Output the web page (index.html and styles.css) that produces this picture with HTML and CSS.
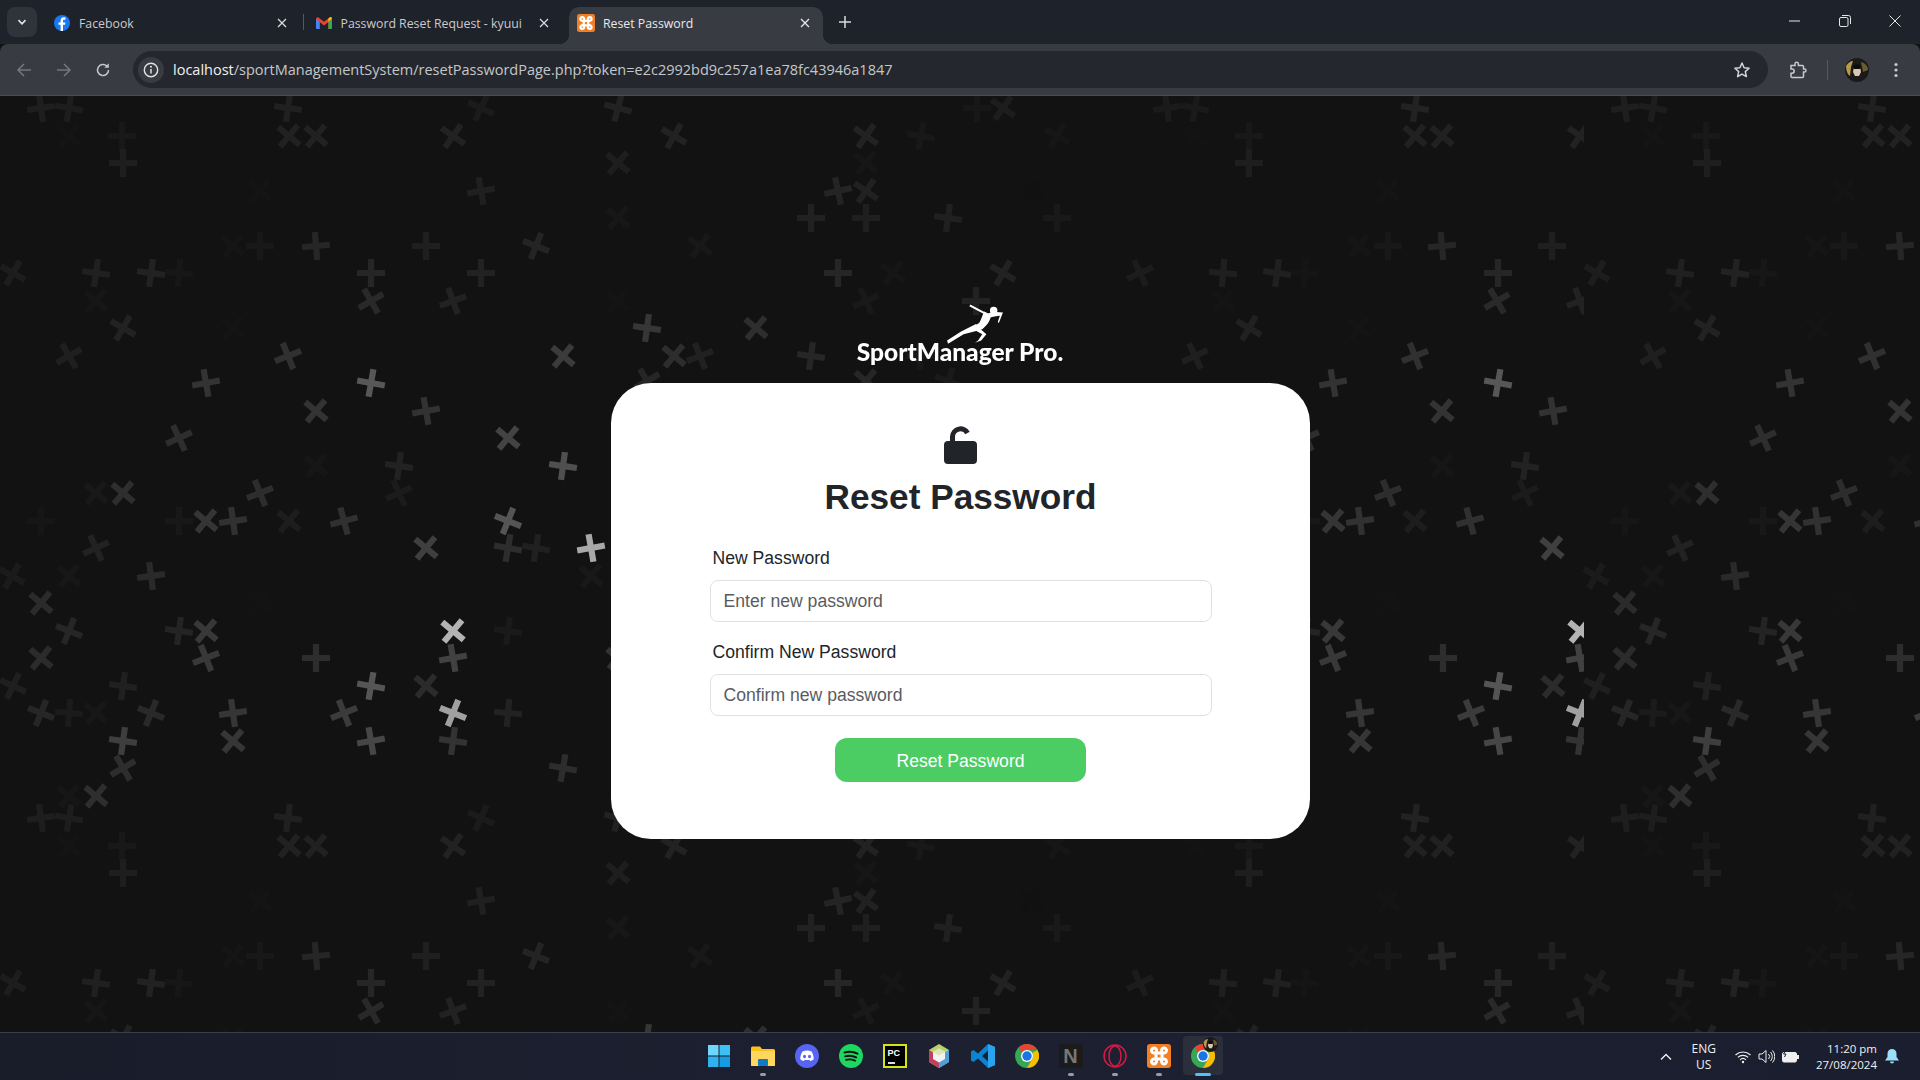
FILE: index.html
```html
<!DOCTYPE html>
<html lang="en">
<head>
    <meta charset="UTF-8">
    <meta name="viewport" content="width=device-width, initial-scale=1.0">
    <title>Reset Password</title>
    <link rel="stylesheet" href="styles.css">
</head>
<body>
    <header class="tabstrip">
        <button class="tab-search"><svg width="12" height="12" viewBox="0 0 12 12"><path d="M2.5 4.2 6 7.8l3.5-3.6" fill="none" stroke="#e3e3e3" stroke-width="1.7"/></svg></button>
        <div class="tab tab-sep">
            <svg class="favicon" viewBox="0 0 16 16"><circle cx="8" cy="8" r="8" fill="#1877f2"/><path d="M9 16V9.800h2l.4-2.400H9V6c0-.8.3-1.300 1.300-1.300h1.200V2.500C11 2.400 10.400 2.300 9.800 2.300 7.900 2.300 6.600 3.500 6.600 5.600v1.800H4.500v2.400h2.100V16z" fill="#fff"/></svg>
            <span class="tab-title">Facebook</span>
            <svg class="tab-close" viewBox="0 0 10 10"><path d="M1 1l8 8M9 1 1 9" stroke="#d8dade" stroke-width="1.3"/></svg>
        </div>
        <div class="tab">
            <svg class="favicon" viewBox="0 0 16 16"><path d="M0 3.500 1 14h2.600V7L8 10.400 12.400 7v7H15l1-10.500L14.300 2 8 6.800 1.700 2z" fill="#ea4335"/><path d="M0 3.500 3.600 7v7H1.100A1.100 1.100 0 0 1 0 12.900z" fill="#4285f4"/><path d="M16 3.500 12.400 7v7h2.500a1.100 1.100 0 0 0 1.100-1.100z" fill="#34a853"/><path d="M12.400 7 16 3.500c0-1.300-1-1.900-1.700-1.500l-1.900 1.500z" fill="#fbbc04"/></svg>
            <span class="tab-title">Password Reset Request - kyuui</span>
            <svg class="tab-close" viewBox="0 0 10 10"><path d="M1 1l8 8M9 1 1 9" stroke="#d8dade" stroke-width="1.3"/></svg>
        </div>
        <div class="tab tab-active">
            <svg class="favicon favicon-lg" viewBox="0 0 24 24"><use href="#xampp"/></svg>
            <span class="tab-title">Reset Password</span>
            <svg class="tab-close" viewBox="0 0 10 10"><path d="M1 1l8 8M9 1 1 9" stroke="#e8e9eb" stroke-width="1.3"/></svg>
        </div>
        <svg class="new-tab" viewBox="0 0 12 12"><path d="M6 0v12M0 6h12" stroke="#d8dade" stroke-width="1.5"/></svg>
        <div class="window-controls">
            <svg width="12" height="12" viewBox="0 0 12 12"><path d="M0 6h11" stroke="#e6e6e6"/></svg>
            <svg width="12" height="12" viewBox="0 0 12 12"><rect x=".5" y="2.5" width="8.5" height="9" rx="1.5" fill="none" stroke="#e6e6e6"/><path d="M3 .5h6.500a2 2 0 0 1 2 2V9" fill="none" stroke="#e6e6e6"/></svg>
            <svg width="12" height="12" viewBox="0 0 12 12"><path d="M.5.5l11 11M11.500.5l-11 11" stroke="#e6e6e6"/></svg>
        </div>
    </header>

    <nav class="toolbar">
        <svg class="tool-btn" viewBox="0 0 16 16"><path d="M15 8H2M8 2 2 8l6 6" fill="none" stroke="#74777c" stroke-width="1.5"/></svg>
        <svg class="tool-btn" viewBox="0 0 16 16"><path d="M1 8h13M8 2l6 6-6 6" fill="none" stroke="#74777c" stroke-width="1.5"/></svg>
        <svg class="tool-btn" viewBox="0 0 16 16"><path d="M13.500 8A5.500 5.500 0 1 1 11.800 4" fill="none" stroke="#c7c9cc" stroke-width="1.5"/><path d="M13.800 1.200v4.500H9.300z" fill="#c7c9cc"/></svg>
        <div class="omnibox">
            <span class="site-chip"><svg width="16" height="16" viewBox="0 0 16 16"><circle cx="8" cy="8" r="6.7" fill="none" stroke="#e3e3e3" stroke-width="1.4"/><path d="M8 7v4.500" stroke="#e3e3e3" stroke-width="1.5"/><circle cx="8" cy="4.8" r="1" fill="#e3e3e3"/></svg></span>
            <span class="url"><b>localhost</b>/sportManagementSystem/resetPasswordPage.php?token=e2c2992bd9c257a1ea78fc43946a1847</span>
            <svg class="star" width="18" height="18" viewBox="0 0 18 18"><path d="M9 2l2.100 4.700 5 .5-3.800 3.400 1.100 5L9 13.100l-4.400 2.500 1.100-5L1.900 7.200l5-.5z" fill="none" stroke="#d3d5d8" stroke-width="1.5" stroke-linejoin="round"/></svg>
        </div>
        <svg class="tool-btn ext" viewBox="0 0 18 18"><path d="M2 4.500h4V3a1.700 1.700 0 0 1 3.400 0v1.500h4.100a1 1 0 0 1 1 1V8h1a1.500 1.500 0 0 1 0 3h-1v4.500a1 1 0 0 1-1 1H3a1 1 0 0 1-1-1v-3.200h1a2.200 2.200 0 0 0 0-4.400H2z" fill="none" stroke="#c7c9cc" stroke-width="1.5"/></svg>
        <span class="toolbar-sep"></span>
        <svg class="avatar" viewBox="0 0 24 24"><use href="#face"/></svg>
        <svg class="dots" viewBox="0 0 16 16"><circle cx="8" cy="2.5" r="1.6" fill="#c7c9cc"/><circle cx="8" cy="8" r="1.6" fill="#c7c9cc"/><circle cx="8" cy="13.5" r="1.6" fill="#c7c9cc"/></svg>
    </nav>

    <main class="page">
        <svg class="pattern" viewBox="0 96 1920 936" aria-hidden="true">
            <defs>
                <filter id="dim" color-interpolation-filters="sRGB" x="0" y="0" width="100%" height="100%">
                    <feComponentTransfer>
                        <feFuncR type="table" tableValues="0 .08 .15 .25 .37 .5 .6 .7 .8 .9 1"/>
                        <feFuncG type="table" tableValues="0 .08 .15 .25 .37 .5 .6 .7 .8 .9 1"/>
                        <feFuncB type="table" tableValues="0 .08 .15 .25 .37 .5 .6 .7 .8 .9 1"/>
                    </feComponentTransfer>
                </filter>
                <path id="m" d="M-3.100-14h6.200v10.900H14v6.200H3.100V14h-6.200V3.100H-14v-6.200h10.900z"/>
                <clipPath id="tile-clip"><rect x="-20" y="0" width="1604" height="900"/></clipPath>
                <g id="tile">
                    <use href="#m" transform="translate(41 108) rotate(-8)" fill="#282828"/>
                    <use href="#m" transform="translate(69 108) rotate(10)" fill="#262626"/>
                    <use href="#m" transform="translate(288 108) rotate(8)" fill="#2b2b2b"/>
                    <use href="#m" transform="translate(481 108) rotate(25)" fill="#242424"/>
                    <use href="#m" transform="translate(618 108) rotate(15)" fill="#2e2e2e"/>
                    <use href="#m" transform="translate(69 136) rotate(40)" fill="#191919"/>
                    <use href="#m" transform="translate(122 136)" fill="#1f1f1f"/>
                    <use href="#m" transform="translate(289 136) rotate(40)" fill="#2c2c2c"/>
                    <use href="#m" transform="translate(316 136) rotate(40)" fill="#2c2c2c"/>
                    <use href="#m" transform="translate(453 136) rotate(35)" fill="#2e2e2e"/>
                    <use href="#m" transform="translate(123 163)" fill="#282828"/>
                    <use href="#m" transform="translate(618 163) rotate(40)" fill="#282828"/>
                    <use href="#m" transform="translate(535 163)" fill="#171717"/>
                    <use href="#m" transform="translate(481 191) rotate(-10)" fill="#2b2b2b"/>
                    <use href="#m" transform="translate(260 191) rotate(40)" fill="#191919"/>
                    <use href="#m" transform="translate(618 218) rotate(40)" fill="#1e1e1e"/>
                    <use href="#m" transform="translate(233 246) rotate(40)" fill="#1b1b1b"/>
                    <use href="#m" transform="translate(260 246)" fill="#1f1f1f"/>
                    <use href="#m" transform="translate(316 246) rotate(-5)" fill="#333"/>
                    <use href="#m" transform="translate(426 246)" fill="#2a2a2a"/>
                    <use href="#m" transform="translate(536 246) rotate(22)" fill="#303030"/>
                    <use href="#m" transform="translate(13 273) rotate(30)" fill="#262626"/>
                    <use href="#m" transform="translate(96 273) rotate(8)" fill="#2b2b2b"/>
                    <use href="#m" transform="translate(151 273) rotate(8)" fill="#2e2e2e"/>
                    <use href="#m" transform="translate(179 273) rotate(5)" fill="#1e1e1e"/>
                    <use href="#m" transform="translate(371 273)" fill="#333"/>
                    <use href="#m" transform="translate(481 273)" fill="#2e2e2e"/>
                    <use href="#m" transform="translate(96 301) rotate(40)" fill="#1c1c1c"/>
                    <use href="#m" transform="translate(371 301) rotate(-30)" fill="#363636"/>
                    <use href="#m" transform="translate(453 301) rotate(-20)" fill="#2d2d2d"/>
                    <use href="#m" transform="translate(618 301) rotate(40)" fill="#191919"/>
                    <use href="#m" transform="translate(123 328) rotate(30)" fill="#2d2d2d"/>
                    <use href="#m" transform="translate(233 328) rotate(40)" fill="#191919"/>
                    <use href="#m" transform="translate(69 356) rotate(-30)" fill="#292929"/>
                    <use href="#m" transform="translate(288 356) rotate(-22)" fill="#3d3d3d"/>
                    <use href="#m" transform="translate(563 356) rotate(40)" fill="#484848"/>
                    <use href="#m" transform="translate(206 383) rotate(-10)" fill="#404040"/>
                    <use href="#m" transform="translate(371 383) rotate(10)" fill="#606060"/>
                    <use href="#m" transform="translate(316 411) rotate(40)" fill="#404040"/>
                    <use href="#m" transform="translate(426 411) rotate(-10)" fill="#3f3f3f"/>
                    <use href="#m" transform="translate(179 438) rotate(-25)" fill="#3b3b3b"/>
                    <use href="#m" transform="translate(508 438) rotate(40)" fill="#505050"/>
                    <use href="#m" transform="translate(563 466) rotate(8)" fill="#5a5a5a"/>
                    <use href="#m" transform="translate(316 466) rotate(40)" fill="#1d1d1d"/>
                    <use href="#m" transform="translate(399 466) rotate(8)" fill="#2d2d2d"/>
                    <use href="#m" transform="translate(96 493) rotate(40)" fill="#202020"/>
                    <use href="#m" transform="translate(123 493) rotate(40)" fill="#3b3b3b"/>
                    <use href="#m" transform="translate(260 493) rotate(-22)" fill="#3a3a3a"/>
                    <use href="#m" transform="translate(399 493) rotate(-25)" fill="#232323"/>
                    <use href="#m" transform="translate(41 521)" fill="#1c1c1c"/>
                    <use href="#m" transform="translate(179 521)" fill="#1f1f1f"/>
                    <use href="#m" transform="translate(206 521) rotate(40)" fill="#424242"/>
                    <use href="#m" transform="translate(233 521) rotate(-8)" fill="#3e3e3e"/>
                    <use href="#m" transform="translate(289 521) rotate(40)" fill="#262626"/>
                    <use href="#m" transform="translate(344 521) rotate(-15)" fill="#3d3d3d"/>
                    <use href="#m" transform="translate(508 521) rotate(22)" fill="#5f5f5f"/>
                    <use href="#m" transform="translate(96 548) rotate(-25)" fill="#2d2d2d"/>
                    <use href="#m" transform="translate(426 548) rotate(40)" fill="#4c4c4c"/>
                    <use href="#m" transform="translate(508 548) rotate(10)" fill="#3a3a3a"/>
                    <use href="#m" transform="translate(536 548) rotate(10)" fill="#2b2b2b"/>
                    <use href="#m" transform="translate(591 548) rotate(-10)" fill="#a8a8a8"/>
                    <use href="#m" transform="translate(12 576) rotate(30)" fill="#242424"/>
                    <use href="#m" transform="translate(69 576) rotate(40)" fill="#1e1e1e"/>
                    <use href="#m" transform="translate(151 576) rotate(-8)" fill="#373737"/>
                    <use href="#m" transform="translate(591 576) rotate(40)" fill="#202020"/>
                    <use href="#m" transform="translate(41 603) rotate(40)" fill="#383838"/>
                    <use href="#m" transform="translate(260 603) rotate(40)" fill="#181818"/>
                    <use href="#m" transform="translate(69 631) rotate(22)" fill="#333"/>
                    <use href="#m" transform="translate(179 631) rotate(8)" fill="#303030"/>
                    <use href="#m" transform="translate(206 631) rotate(40)" fill="#454545"/>
                    <use href="#m" transform="translate(453 631) rotate(40)" fill="#b4b4b4"/>
                    <use href="#m" transform="translate(508 631) rotate(8)" fill="#222"/>
                    <use href="#m" transform="translate(41 658) rotate(40)" fill="#383838"/>
                    <use href="#m" transform="translate(206 658) rotate(-22)" fill="#454545"/>
                    <use href="#m" transform="translate(316 658)" fill="#3a3a3a"/>
                    <use href="#m" transform="translate(453 658) rotate(-10)" fill="#4e4e4e"/>
                    <use href="#m" transform="translate(618 658) rotate(40)" fill="#404040"/>
                    <use href="#m" transform="translate(13 686) rotate(25)" fill="#2a2a2a"/>
                    <use href="#m" transform="translate(123 686) rotate(8)" fill="#2b2b2b"/>
                    <use href="#m" transform="translate(371 686) rotate(10)" fill="#5f5f5f"/>
                    <use href="#m" transform="translate(426 686) rotate(40)" fill="#383838"/>
                    <use href="#m" transform="translate(41 713) rotate(22)" fill="#333"/>
                    <use href="#m" transform="translate(69 713) rotate(5)" fill="#232323"/>
                    <use href="#m" transform="translate(96 713) rotate(40)" fill="#1e1e1e"/>
                    <use href="#m" transform="translate(151 713) rotate(22)" fill="#363636"/>
                    <use href="#m" transform="translate(233 713) rotate(-8)" fill="#434343"/>
                    <use href="#m" transform="translate(344 713) rotate(-22)" fill="#484848"/>
                    <use href="#m" transform="translate(453 713) rotate(22)" fill="#a0a0a0"/>
                    <use href="#m" transform="translate(508 713) rotate(5)" fill="#2d2d2d"/>
                    <use href="#m" transform="translate(123 741) rotate(8)" fill="#4b4b4b"/>
                    <use href="#m" transform="translate(233 741) rotate(40)" fill="#434343"/>
                    <use href="#m" transform="translate(371 741) rotate(-10)" fill="#525252"/>
                    <use href="#m" transform="translate(453 741) rotate(8)" fill="#404040"/>
                    <use href="#m" transform="translate(123 768) rotate(-30)" fill="#3a3a3a"/>
                    <use href="#m" transform="translate(563 768) rotate(10)" fill="#3a3a3a"/>
                    <use href="#m" transform="translate(69 796) rotate(40)" fill="#1c1c1c"/>
                    <use href="#m" transform="translate(96 796) rotate(40)" fill="#3b3b3b"/>

                    <use href="#m" transform="translate(674 136) rotate(30)" fill="#2e2e2e"/>
                    <use href="#m" transform="translate(866 136) rotate(35)" fill="#2e2e2e"/>
                    <use href="#m" transform="translate(921 136) rotate(10)" fill="#1f1f1f"/>
                    <use href="#m" transform="translate(977 108)" fill="#1e1e1e"/>
                    <use href="#m" transform="translate(1003 108) rotate(35)" fill="#262626"/>
                    <use href="#m" transform="translate(1167 108) rotate(-8)" fill="#232323"/>
                    <use href="#m" transform="translate(1195 108) rotate(10)" fill="#222"/>
                    <use href="#m" transform="translate(1003 136) rotate(40)" fill="#171717"/>
                    <use href="#m" transform="translate(1057 136) rotate(30)" fill="#1c1c1c"/>
                    <use href="#m" transform="translate(1195 136) rotate(40)" fill="#181818"/>
                    <use href="#m" transform="translate(1249 136)" fill="#202020"/>
                    <use href="#m" transform="translate(866 163) rotate(40)" fill="#1c1c1c"/>
                    <use href="#m" transform="translate(1249 163)" fill="#282828"/>
                    <use href="#m" transform="translate(838 191) rotate(-12)" fill="#303030"/>
                    <use href="#m" transform="translate(866 191) rotate(35)" fill="#2c2c2c"/>
                    <use href="#m" transform="translate(1031 191) rotate(40)" fill="#161616"/>
                    <use href="#m" transform="translate(811 218)" fill="#2c2c2c"/>
                    <use href="#m" transform="translate(866 218)" fill="#2a2a2a"/>
                    <use href="#m" transform="translate(948 218) rotate(8)" fill="#2b2b2b"/>
                    <use href="#m" transform="translate(1057 218)" fill="#212121"/>
                    <use href="#m" transform="translate(1140 218)" fill="#171717"/>
                    <use href="#m" transform="translate(700 246) rotate(35)" fill="#1f1f1f"/>
                    <use href="#m" transform="translate(838 273)" fill="#333"/>
                    <use href="#m" transform="translate(893 273) rotate(35)" fill="#1c1c1c"/>
                    <use href="#m" transform="translate(1003 273) rotate(30)" fill="#2d2d2d"/>
                    <use href="#m" transform="translate(1140 273) rotate(-25)" fill="#252525"/>
                    <use href="#m" transform="translate(1223 273) rotate(5)" fill="#2a2a2a"/>
                    <use href="#m" transform="translate(1277 273) rotate(8)" fill="#2b2b2b"/>
                    <use href="#m" transform="translate(1305 273) rotate(5)" fill="#1b1b1b"/>
                    <use href="#m" transform="translate(866 301) rotate(-25)" fill="#212121"/>
                    <use href="#m" transform="translate(976 301)" fill="#2d2d2d"/>
                    <use href="#m" transform="translate(1223 301) rotate(40)" fill="#191919"/>
                    <use href="#m" transform="translate(647 328) rotate(8)" fill="#434343"/>
                    <use href="#m" transform="translate(756 328) rotate(40)" fill="#3b3b3b"/>
                    <use href="#m" transform="translate(1249 328) rotate(30)" fill="#2c2c2c"/>
                    <use href="#m" transform="translate(674 356) rotate(40)" fill="#3a3a3a"/>
                    <use href="#m" transform="translate(700 356) rotate(-22)" fill="#2c2c2c"/>
                    <use href="#m" transform="translate(811 356) rotate(8)" fill="#333"/>
                    <use href="#m" transform="translate(920 356)" fill="#1f1f1f"/>
                    <use href="#m" transform="translate(1195 356) rotate(-25)" fill="#292929"/>
                    <use href="#m" transform="translate(866 381) rotate(40)" fill="#333"/>
                    <use href="#m" transform="translate(948 381) rotate(20)" fill="#222"/>
                    <use href="#m" transform="translate(647 381) rotate(-30)" fill="#333"/>

                    <use href="#m" transform="translate(1415 108) rotate(8)" fill="#2e2e2e"/>
                    <use href="#m" transform="translate(1415 136) rotate(40)" fill="#2c2c2c"/>
                    <use href="#m" transform="translate(1442 136) rotate(40)" fill="#2c2c2c"/>
                    <use href="#m" transform="translate(1580 136) rotate(35)" fill="#2e2e2e"/>
                    <use href="#m" transform="translate(1388 191) rotate(40)" fill="#191919"/>
                    <use href="#m" transform="translate(1359 246) rotate(40)" fill="#1b1b1b"/>
                    <use href="#m" transform="translate(1388 246)" fill="#1f1f1f"/>
                    <use href="#m" transform="translate(1442 246) rotate(-5)" fill="#333"/>
                    <use href="#m" transform="translate(1552 246)" fill="#2a2a2a"/>
                    <use href="#m" transform="translate(1498 273)" fill="#333"/>
                    <use href="#m" transform="translate(1497 301) rotate(-30)" fill="#363636"/>
                    <use href="#m" transform="translate(1580 301) rotate(-20)" fill="#2d2d2d"/>
                    <use href="#m" transform="translate(1359 328) rotate(40)" fill="#191919"/>
                    <use href="#m" transform="translate(1415 356) rotate(-22)" fill="#3d3d3d"/>
                    <use href="#m" transform="translate(1333 383) rotate(-10)" fill="#404040"/>
                    <use href="#m" transform="translate(1498 383) rotate(10)" fill="#606060"/>
                    <use href="#m" transform="translate(1442 411) rotate(40)" fill="#404040"/>
                    <use href="#m" transform="translate(1553 411) rotate(-10)" fill="#3f3f3f"/>
                    <use href="#m" transform="translate(1306 438) rotate(-25)" fill="#3b3b3b"/>
                    <use href="#m" transform="translate(1442 466) rotate(40)" fill="#1d1d1d"/>
                    <use href="#m" transform="translate(1525 466) rotate(8)" fill="#2d2d2d"/>
                    <use href="#m" transform="translate(1388 493) rotate(-22)" fill="#3a3a3a"/>
                    <use href="#m" transform="translate(1525 493) rotate(-25)" fill="#232323"/>
                    <use href="#m" transform="translate(1306 521)" fill="#1f1f1f"/>
                    <use href="#m" transform="translate(1333 521) rotate(40)" fill="#424242"/>
                    <use href="#m" transform="translate(1360 521) rotate(-8)" fill="#3e3e3e"/>
                    <use href="#m" transform="translate(1415 521) rotate(40)" fill="#262626"/>
                    <use href="#m" transform="translate(1470 521) rotate(-15)" fill="#3d3d3d"/>
                    <use href="#m" transform="translate(1552 548) rotate(40)" fill="#4c4c4c"/>
                    <use href="#m" transform="translate(1388 603) rotate(40)" fill="#181818"/>
                    <use href="#m" transform="translate(1306 631) rotate(8)" fill="#303030"/>
                    <use href="#m" transform="translate(1333 631) rotate(40)" fill="#454545"/>
                    <use href="#m" transform="translate(1580 631) rotate(40)" fill="#b4b4b4"/>
                    <use href="#m" transform="translate(1333 658) rotate(-22)" fill="#454545"/>
                    <use href="#m" transform="translate(1443 658)" fill="#3a3a3a"/>
                    <use href="#m" transform="translate(1580 658) rotate(-10)" fill="#4e4e4e"/>
                    <use href="#m" transform="translate(1498 686) rotate(10)" fill="#5f5f5f"/>
                    <use href="#m" transform="translate(1553 686) rotate(40)" fill="#383838"/>
                    <use href="#m" transform="translate(1360 713) rotate(-8)" fill="#434343"/>
                    <use href="#m" transform="translate(1471 713) rotate(-22)" fill="#484848"/>
                    <use href="#m" transform="translate(1580 713) rotate(22)" fill="#a0a0a0"/>
                    <use href="#m" transform="translate(1360 741) rotate(40)" fill="#434343"/>
                    <use href="#m" transform="translate(1498 741) rotate(-10)" fill="#525252"/>
                    <use href="#m" transform="translate(1580 741) rotate(8)" fill="#404040"/>
                </g>
            </defs>
            <g filter="url(#dim)">
                <g clip-path="url(#tile-clip)"><use href="#tile"/></g>
                <g clip-path="url(#tile-clip)" transform="translate(0 710)"><use href="#tile"/></g>
                <g clip-path="url(#tile-clip)" transform="translate(1584 0)"><use href="#tile"/></g>
                <g clip-path="url(#tile-clip)" transform="translate(1584 710)"><use href="#tile"/></g>
            </g>
        </svg>

        <div class="brand">
            <svg class="runner" viewBox="0 0 56 40">
                <path d="M23 2l15 8" fill="none" stroke="#fff" stroke-width="2"/>
                <path d="M40 10c4-2 10-2 15-1l-4 10-1-1 2-6c-3 0-7 1-10 2z" fill="#fff"/>
                <circle cx="46" cy="7" r="3.6" fill="#fff"/>
                <path d="M37 8l6 3c1 4-3 10-8 14l-5 1-3-4 5-3c2-3 3-7 5-11z" fill="#fff"/>
                <path d="M29 20 15 27 1 36l1 3 15-9 15-4z" fill="#fff"/>
                <path d="M31 23l8 7-5 6-6 2 3-2 4-6-7-4z" fill="#fff"/>
            </svg>
            <span class="brand-name">SportManager Pro.</span>
        </div>

        <section class="card">
            <svg class="lock" viewBox="0 0 35 38"><rect x="1" y="15" width="33" height="23" rx="4" fill="#212529"/><path d="M9.500 17V10.500A8 8 0 0 1 24.500 7" fill="none" stroke="#212529" stroke-width="5"/></svg>
            <h1>Reset Password</h1>
            <form class="form">
                <label for="new-pass">New Password</label>
                <input type="password" id="new-pass" placeholder="Enter new password">
                <label for="confirm-pass">Confirm New Password</label>
                <input type="password" id="confirm-pass" placeholder="Confirm new password">
                <button type="button" class="submit">Reset Password</button>
            </form>
        </section>
    </main>

    <footer class="taskbar">
        <div></div>
        <div class="task-icons">
            <span class="task"><svg viewBox="0 0 24 24"><rect x="1" y="1" width="10.5" height="10.5" fill="#6fd6ff"/><rect x="12.5" y="1" width="10.5" height="10.5" fill="#3cc0f5"/><rect x="1" y="12.5" width="10.5" height="10.5" fill="#2fb0ef"/><rect x="12.5" y="12.5" width="10.5" height="10.5" fill="#169ae2"/></svg></span>
            <span class="task running"><svg viewBox="0 0 24 24"><path d="M0 4a1.500 1.500 0 0 1 1.500-1.500H9L11 5h11.500A1.500 1.500 0 0 1 24 6.500V21a1 1 0 0 1-1 1H1a1 1 0 0 1-1-1z" fill="#fcc21b"/><path d="M0 7h24v14a1 1 0 0 1-1 1H1a1 1 0 0 1-1-1z" fill="#ffd75e"/><rect x="7" y="15" width="10" height="7" rx="1" fill="#0f7bc4"/></svg></span>
            <span class="task"><svg viewBox="0 0 24 24"><circle cx="12" cy="12" r="12" fill="#5865f2"/><path d="M7.500 7.500c3-1.200 6-1.200 9 0 1.500 2.300 2.300 5 2.200 7.800-1.200 1-2.400 1.500-3.600 1.800l-.8-1.300c-1.500.4-3 .4-4.600 0l-.8 1.300c-1.200-.3-2.400-.8-3.600-1.800-.1-2.800.7-5.500 2.200-7.800z" fill="#fff"/><ellipse cx="9.5" cy="12.5" rx="1.5" ry="1.7" fill="#5865f2"/><ellipse cx="14.5" cy="12.5" rx="1.5" ry="1.7" fill="#5865f2"/></svg></span>
            <span class="task"><svg viewBox="0 0 24 24"><circle cx="12" cy="12" r="12" fill="#1ed760"/><path d="M5.500 8.500c4-1.200 9-1 13 1.200M6.200 12.300c3.500-1 7.500-.7 11 1.100M7 15.800c3-.8 6-.5 9 .9" fill="none" stroke="#111" stroke-width="1.9" stroke-linecap="round"/></svg></span>
            <span class="task"><span class="pycharm">PC<i></i></span></span>
            <span class="task"><svg viewBox="0 0 24 24"><path d="M12 0 22 6v12l-10 6L2 18V6z" fill="#b9d36c"/><path d="M2 6l10 6v12L2 18z" fill="#c2405f"/><path d="M22 6 12 12v12l10-6z" fill="#4f9fd8"/><path d="M12 4.500 18 8v7l-6 3.500L6 15V8z" fill="#f2f2f2"/><path d="M6 8l6 3.500L18 8l-6-3.500z" fill="#dfe6b5"/></svg></span>
            <span class="task"><svg viewBox="0 0 24 24"><path d="M17 0l7 3v18l-7 3L7 14.500 2.500 18 0 16.500V7.500L2.500 6 7 9.500zm0 6.500L11 12l6 5.500z" fill="#0a84d0"/><path d="M17 0l7 3v18l-7 3z" fill="#2aa3ee"/></svg></span>
            <span class="task"><svg viewBox="0 0 24 24"><use href="#chrome"/></svg></span>
            <span class="task running"><span class="notion">N</span></span>
            <span class="task running"><svg viewBox="0 0 24 24"><circle cx="12" cy="12" r="11" fill="none" stroke="#d41a44" stroke-width="1.5"/><ellipse cx="12" cy="12" rx="6" ry="10" fill="none" stroke="#d41a44" stroke-width="1.5"/></svg></span>
            <span class="task running"><svg viewBox="0 0 24 24"><use href="#xampp"/></svg></span>
            <span class="task task-active"><svg viewBox="0 0 24 24"><use href="#chrome"/></svg><svg class="task-badge" viewBox="0 0 24 24"><use href="#face"/></svg></span>
        </div>
        <div class="tray">
            <svg class="caret" width="12" height="8" viewBox="0 0 12 8"><path d="M1 6.500 6 1.500l5 5" fill="none" stroke="#f0f0f0" stroke-width="1.4"/></svg>
            <div class="lang">ENG<br>US</div>
            <svg class="wifi" width="16" height="14" viewBox="0 0 16 14"><path d="M.5 5a11 11 0 0 1 15 0M2.800 7.400a7.700 7.700 0 0 1 10.400 0M5 9.800a4.400 4.400 0 0 1 6 0" fill="none" stroke="#f0f0f0" stroke-width="1.1"/><circle cx="8" cy="12" r="1.2" fill="#f0f0f0"/></svg>
            <svg class="volume" width="17" height="15" viewBox="0 0 17 15"><path d="M1 5h3l4-3.500v12L4 10H1z" fill="none" stroke="#f0f0f0"/><path d="M10.500 5a3.500 3.500 0 0 1 0 5M12.500 3a6.500 6.500 0 0 1 0 9M14.500 1.500a9 9 0 0 1 0 12" fill="none" stroke="#f0f0f0"/></svg>
            <svg class="battery" width="17" height="13" viewBox="0 0 17 13"><rect x=".5" y="2.5" width="14" height="9.5" rx="1.5" fill="#f0f0f0" stroke="#f0f0f0"/><rect x="15" y="5" width="2" height="4" fill="#f0f0f0"/><path d="M4 0 1.500 4H4L2.500 7" fill="none" stroke="#1b1f2e"/></svg>
            <div class="clock">11:20 pm<br>27/08/2024</div>
            <svg class="bell" width="14" height="15" viewBox="0 0 14 15"><path d="M7 0a4.500 4.500 0 0 1 4.500 4.500V8L14 11.500H0L2.500 8V4.500A4.500 4.500 0 0 1 7 0z" fill="#9be0fb"/><path d="M5 12.500h4a2 2 0 0 1-4 0z" fill="#9be0fb"/></svg>
        </div>
    </footer>

    <svg class="sprites" width="0" height="0" aria-hidden="true">
        <defs>
            <g id="chrome">
                <circle cx="12" cy="12" r="12" fill="#34a853"/>
                <path d="M22.400 6A12 12 0 0 1 12 24l5.200-9a6 6 0 0 0 0-6z" fill="#fbbc04"/>
                <path d="M12 0a12 12 0 0 1 10.400 6H12a6 6 0 0 0-5.200 3L3.600 3.500A12 12 0 0 1 12 0z" fill="#ea4335"/>
                <circle cx="12" cy="12" r="6" fill="#fff"/>
                <circle cx="12" cy="12" r="4.7" fill="#1a73e8"/>
            </g>
            <g id="xampp">
                <rect width="24" height="24" rx="3" fill="#f37f24"/>
                <path d="M9 9h6v6H9zM9 9H7.500a2.500 2.500 0 1 1 2-2.500zM15 9h1.500a2.500 2.500 0 1 0-2-2.500zM9 15H7.500a2.500 2.500 0 1 0 2 2.500zM15 15h1.500a2.500 2.500 0 1 1-2 2.500z" fill="none" stroke="#fff" stroke-width="3"/>
            </g>
            <g id="face">
                <circle cx="12" cy="12" r="12" fill="#1c1a18"/>
                <path d="M1 8c2-3 4-5 7-5l-2 6-1 9c-3-2-4-6-4-10z" fill="#b59a4a"/>
                <path d="M16 4c4 1 7 4 7 8l-5 2z" fill="#6b5a35"/>
                <path d="M9 9h6l1 5-2 4h-4l-2-4z" fill="#d9c9b4"/>
                <path d="M8 8c2-2 6-2 8 0l-1 3H9z" fill="#0d0c0c"/>
            </g>
        </defs>
    </svg>
</body>
</html>
```

FILE: styles.css
```css
* {
    box-sizing: border-box;
}
body {
    display: flex;
    flex-direction: column;
    height: 100vh;
    margin: 0;
    overflow: hidden;
    font-family: "Liberation Sans", Arial, sans-serif;
    background: #121212;
}
svg {
    display: block;
    flex: none;
}
.sprites {
    position: absolute;
}

/* browser tabs */
.tabstrip {
    display: flex;
    align-items: flex-end;
    flex: none;
    height: 44px;
    padding-left: 7px;
    background: #1e222a;
    font-family: "Open Sans", sans-serif;
    font-size: 12.3px;
    color: #c9cbcf;
}
.tab-search {
    width: 30px;
    height: 30px;
    margin: 0 9px 7px 0;
    padding: 0 0 0 9px;
    border: none;
    border-radius: 8px;
    background: #2f333a;
}
.tab {
    position: relative;
    display: flex;
    align-items: center;
    width: 254px;
    height: 37px;
    margin-right: 7.5px;
    padding: 1px 13px 6px 8px;
}
.tab-sep::after {
    content: "";
    position: absolute;
    top: 7px;
    right: -4px;
    width: 1px;
    height: 16px;
    background: #555960;
}
.tab-active {
    margin-right: 0;
    background: #383b42;
    border-radius: 10px 10px 0 0;
    color: #e8e9eb;
}
.tab-active::before,
.tab-active::after {
    content: "";
    position: absolute;
    bottom: 0;
    width: 10px;
    height: 10px;
}
.tab-active::before {
    left: -10px;
    background: radial-gradient(circle at 0 0, transparent 10px, #383b42 10.5px);
}
.tab-active::after {
    right: -10px;
    background: radial-gradient(circle at 100% 0, transparent 10px, #383b42 10.5px);
}
.favicon {
    width: 16px;
    height: 16px;
    margin-right: 9px;
}
.favicon-lg {
    width: 18px;
    height: 18px;
    margin-right: 8px;
}
.tab-title {
    flex: 1;
    overflow: hidden;
    white-space: nowrap;
}
.tab-close {
    width: 10px;
    height: 10px;
    margin-left: 8px;
}
.new-tab {
    width: 12px;
    height: 12px;
    margin: 0 0 16px 16px;
}
.window-controls {
    display: flex;
    align-items: center;
    gap: 38px;
    height: 44px;
    margin-left: auto;
    padding: 0 19px 2px 0;
}

/* browser toolbar */
.toolbar {
    display: flex;
    align-items: center;
    flex: none;
    height: 52px;
    padding-left: 8px;
    background: #383b42;
    border-bottom: 1px solid #4a4c51;
    border-radius: 8px 8px 0 0;
}
.tool-btn {
    width: 16px;
    height: 16px;
    margin: 0 15.5px 0 8px;
}
.omnibox {
    display: flex;
    align-items: center;
    width: 1635px;
    height: 37px;
    margin-left: 6.5px;
    padding: 0 17px 0 5px;
    background: #24272e;
    border-radius: 19px;
}
.site-chip {
    display: flex;
    align-items: center;
    justify-content: center;
    width: 26px;
    height: 26px;
    border-radius: 50%;
    background: #383b42;
}
.url {
    flex: 1;
    margin-left: 9px;
    font-family: "Open Sans", sans-serif;
    font-size: 14.5px;
    color: #c4c7c9;
    white-space: nowrap;
}
.url b {
    font-weight: 400;
    color: #f1f1f1;
}
.ext {
    width: 18px;
    height: 18px;
    margin: 0 0 0 21px;
}
.toolbar-sep {
    width: 1px;
    height: 20px;
    margin-left: 20px;
    background: #55585e;
}
.avatar {
    width: 24px;
    height: 24px;
    margin-left: 17px;
}
.dots {
    width: 16px;
    height: 16px;
    margin-left: 19px;
}

/* page */
.page {
    position: relative;
    display: flex;
    flex: 1;
    flex-direction: column;
    align-items: center;
    min-height: 0;
    overflow: hidden;
    padding-top: 193px;
}
.pattern {
    position: absolute;
    top: 0;
    left: 0;
    width: 1920px;
    height: 936px;
}
.brand {
    position: relative;
    display: flex;
    flex-direction: column;
    align-items: center;
    height: 94px;
    padding-top: 14px;
}
.runner {
    width: 58px;
    height: 42px;
    margin-left: 30px;
}
.brand-name {
    margin-top: -8px;
    font-family: Lato, sans-serif;
    font-size: 24.5px;
    font-weight: 900;
    line-height: 30px;
    color: #fff;
    white-space: nowrap;
}
.card {
    position: relative;
    display: flex;
    flex-direction: column;
    align-items: center;
    width: 699px;
    height: 456px;
    margin-left: 1px;
    padding-top: 43px;
    background: #fff;
    border-radius: 40px;
    color: #212529;
}
.lock {
    width: 35px;
    height: 38px;
}
.card h1 {
    margin: 11px 0 27px;
    font-size: 35.2px;
    font-weight: 700;
    line-height: 44px;
}
.form {
    display: flex;
    flex-direction: column;
    width: 502px;
}
.form label {
    margin-left: 3px;
    font-size: 17.6px;
    line-height: 24px;
}
.form input {
    height: 42px;
    margin: 10px 0 18px;
    padding: 0 13px;
    border: 1px solid #dee2e6;
    border-radius: 8px;
    font-family: inherit;
    font-size: 17.6px;
    color: #212529;
}
.form input::placeholder {
    color: #595c5f;
}
.submit {
    align-self: center;
    width: 251px;
    height: 44px;
    margin-top: 4px;
    padding: 2px 0 0;
    border: none;
    border-radius: 12px;
    background: #4bcd64;
    color: #fff;
    font-family: inherit;
    font-size: 17.6px;
}

/* windows taskbar */
.taskbar {
    display: grid;
    grid-template-columns: 1fr auto 1fr;
    align-items: center;
    flex: none;
    height: 48px;
    background: linear-gradient(90deg, #191d2a, #1d2031 50%, #1a1e2e);
    border-top: 1px solid #3b3f4c;
    font-family: "Open Sans", sans-serif;
    font-size: 11.5px;
    color: #f0f0f0;
}
.task-icons {
    display: flex;
    align-self: start;
    margin-left: 1px;
}
.task {
    position: relative;
    display: flex;
    align-items: center;
    justify-content: center;
    width: 44px;
    height: 46px;
}
.task svg {
    width: 24px;
    height: 24px;
}
.task.running::after,
.task-active::after {
    content: "";
    position: absolute;
    bottom: 3px;
    left: 19px;
    width: 6px;
    height: 3px;
    border-radius: 2px;
    background: #9a9ca3;
}
.task-active::before {
    content: "";
    position: absolute;
    top: 3px;
    left: 2px;
    width: 40px;
    height: 39px;
    border-radius: 4px;
    background: #2b2f3c;
}
.task-active::after {
    left: 14px;
    width: 16px;
    background: #4cc2ff;
}
.task-active svg {
    position: relative;
}
.task .task-badge {
    position: absolute;
    top: 4px;
    right: 7px;
    width: 15px;
    height: 15px;
}
.pycharm {
    position: relative;
    width: 24px;
    height: 24px;
    padding: 2px 0 0 3px;
    border: 2px solid #d6e21a;
    background: #000;
    font: 700 9px/10px "Liberation Sans", sans-serif;
    color: #fff;
}
.pycharm i {
    position: absolute;
    bottom: 2px;
    left: 3px;
    width: 7px;
    height: 2px;
    background: #ddd;
}
.notion {
    width: 24px;
    height: 24px;
    border-radius: 3px;
    background: #1b1b1b;
    font: 700 20px/24px "Liberation Sans", sans-serif;
    color: #777;
    text-align: center;
}
.tray {
    display: flex;
    align-items: center;
    justify-content: flex-end;
    line-height: 16px;
}
.caret {
    margin-right: 20px;
}
.lang {
    margin-right: 19px;
    font-size: 12px;
    text-align: center;
}
.volume {
    margin-left: 7px;
}
.battery {
    margin: 0 17px 0 7px;
}
.clock {
    text-align: right;
}
.bell {
    margin: 0 21px 0 8px;
}
```
